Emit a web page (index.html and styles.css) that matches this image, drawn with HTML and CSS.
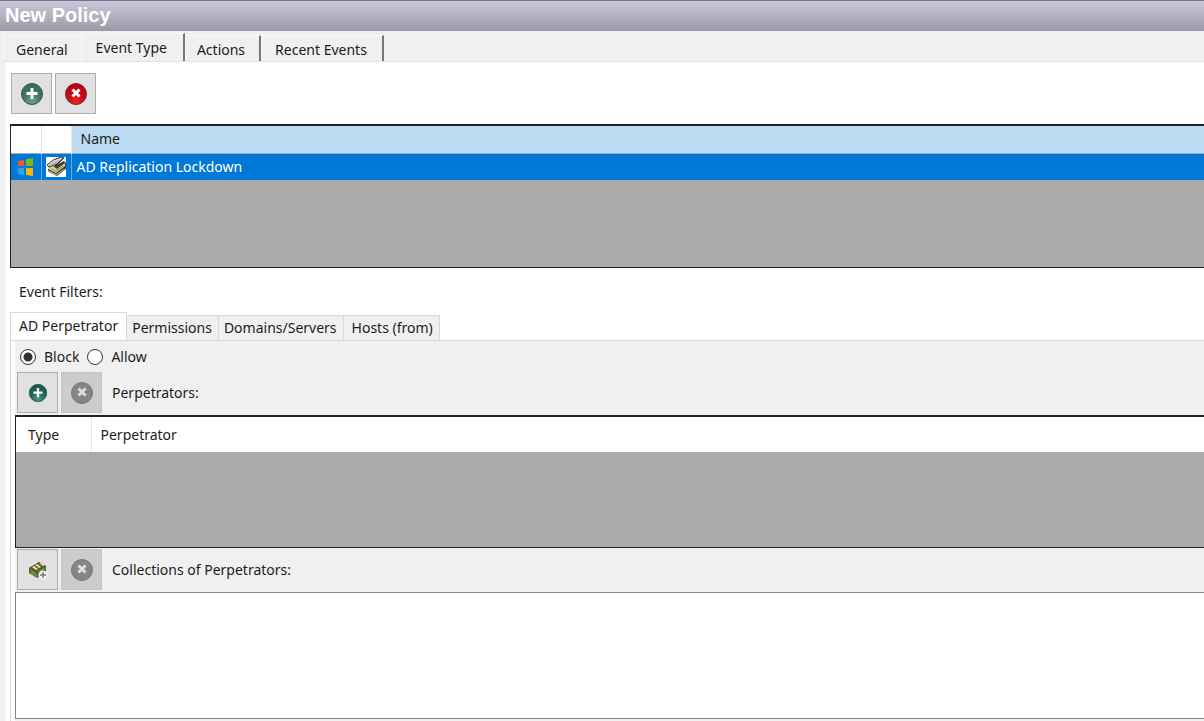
FILE: index.html
```html
<!DOCTYPE html>
<html lang="en">
<head>
<meta charset="utf-8">
<title>New Policy</title>
<link rel="stylesheet" href="styles.css">
</head>
<body>
<svg class="defs" aria-hidden="true">
  <defs>
    <radialGradient id="green" cx="50%" cy="85%" r="85%"><stop offset="0" stop-color="#68a294"/><stop offset=".5" stop-color="#3f7569"/><stop offset="1" stop-color="#3a665d"/></radialGradient>
    <radialGradient id="dark-green" cx="50%" cy="85%" r="85%"><stop offset="0" stop-color="#4c9a83"/><stop offset=".5" stop-color="#1f6755"/><stop offset="1" stop-color="#1d5447"/></radialGradient>
    <radialGradient id="red" cx="50%" cy="85%" r="85%"><stop offset="0" stop-color="#ee2727"/><stop offset=".5" stop-color="#c50b12"/><stop offset="1" stop-color="#b0070d"/></radialGradient>
    <symbol id="plus" viewBox="0 0 24 24"><path d="M12 6v11M6.500 11.500h11" stroke="#fff" stroke-width="2.800" fill="none"/></symbol>
    <symbol id="cross" viewBox="0 0 24 24"><path d="M8.500 7.500l7 7M15.500 7.500l-7 7" stroke="#fff" stroke-width="3" fill="none"/></symbol>
    <symbol id="remove-off" viewBox="0 0 24 24"><circle cx="12" cy="12" r="10.5" fill="#858585" stroke="#777"/><path d="M8.500 7.500l7 7M15.500 7.500l-7 7" stroke="#dedede" stroke-width="3" fill="none"/></symbol>
  </defs>
</svg>
<header class="titlebar"><h1>New Policy</h1></header>
<nav class="tabs" role="tablist" aria-label="Policy">
  <button class="tab" role="tab">General</button>
  <button class="tab tab-active" role="tab" aria-selected="true">Event Type</button>
  <button class="tab tab-edge" role="tab">Actions</button>
  <button class="tab tab-edge tab-last" role="tab">Recent Events</button>
</nav>
<main class="page">
  <div class="toolbar">
    <button class="tool" aria-label="Add event type"><svg viewBox="0 0 24 24"><circle cx="12" cy="12" r="10.5" fill="url(#green)" stroke="#34564f"/><use href="#plus"/></svg></button>
    <button class="tool" aria-label="Remove event type"><svg viewBox="0 0 24 24"><circle cx="12" cy="12" r="10.5" fill="url(#red)" stroke="#83262a"/><use href="#cross"/></svg></button>
  </div>
  <div class="grid events">
    <table>
      <thead><tr><th class="icon-col"></th><th class="icon-col"></th><th class="name-head">Name</th></tr></thead>
      <tbody><tr>
        <td class="icon-col"><svg class="windows" viewBox="0 0 18 20" role="img" aria-label="Windows"><path d="M1 4l6-1v6H1z" fill="#f05a22"/><path d="M9 2l7-1v8H9z" fill="#7cbb12"/><path d="M1 11h6v7l-6-1z" fill="#2ba4f0"/><path d="M9 11h7v8l-7-1z" fill="#f9b500"/></svg></td>
        <td class="icon-col"><svg class="scanner" viewBox="0 0 20 20" role="img" aria-label="Active Directory"><path fill="#fff" d="M0 0h20v20H0z"/><path d="M2 11l6-2 10-5 2 2v6l-9 7-9-5z" fill="#3c3d30"/><path d="M2 11l5-2 4 3 8-6v3l-9 7-8-4z" fill="#d6d48a"/><path d="M5 12l5 2 7-5" fill="none" stroke="#8b8c5b"/><path d="M2 14l8 4 9-6" fill="none" stroke="#a9a98c" stroke-width="1.500"/><path d="M1 8l6-5 8-3 3 1-7 6-8 3z" fill="#b5b6b2" stroke="#44453f"/><path d="M3 8l5-4 7-2" fill="none" stroke="#e5e5e2"/><path d="M9 9l9-8" stroke="#222"/></svg></td>
        <td class="name-cell">AD Replication Lockdown</td>
      </tr></tbody>
    </table>
  </div>
  <h2 class="filters-title">Event Filters:</h2>
  <nav class="filter-tabs" role="tablist" aria-label="Event Filters">
    <button class="filter-tab filter-active" role="tab" aria-selected="true">AD Perpetrator</button>
    <button class="filter-tab" role="tab">Permissions</button>
    <button class="filter-tab" role="tab">Domains/Servers</button>
    <button class="filter-tab filter-last" role="tab">Hosts (from)</button>
  </nav>
  <section class="filter-frame">
    <div class="filter-body">
      <div class="modes">
        <input type="radio" name="mode" id="block" checked><label for="block">Block</label>
        <input type="radio" name="mode" id="allow"><label for="allow">Allow</label>
      </div>
      <div class="toolbar filter-tools">
        <button class="tool" aria-label="Add perpetrator"><svg class="small" viewBox="0 0 24 24"><circle cx="12" cy="12" r="10.5" fill="url(#dark-green)" stroke="#2c6256"/><use href="#plus"/></svg></button>
        <button class="tool" disabled aria-label="Remove perpetrator"><svg viewBox="0 0 24 24"><use href="#remove-off"/></svg></button>
        <span class="tool-label">Perpetrators:</span>
      </div>
      <div class="grid perpetrators">
        <table><thead><tr><th class="type-col">Type</th><th class="who-col">Perpetrator</th></tr></thead></table>
      </div>
      <div class="toolbar filter-tools">
        <button class="tool" aria-label="Add collection"><svg class="small" viewBox="0 0 20 20"><path d="M1 8l10-6 7 4v7l-9 5-8-5z" fill="#4d6a2c"/><path d="M1 8l10-6 7 4-9 6z" fill="#5a5c3a"/><path d="M4 7l4 3 2-1-4-3zM7 5l4 3 2-1-4-3zM11 3l4 3 2-1-4-2z" fill="#efe5a0"/><path d="M2 10l6 4v3M4 12v3M6 13v3M10 12l7-4M10 15l6-4" fill="none" stroke="#82a64c"/><circle cx="15" cy="15" r="4.500" fill="#f2f2f2"/><path d="M15 12v6M12 15h6" stroke="#777" stroke-width="1.400"/></svg></button>
        <button class="tool" disabled aria-label="Remove collection"><svg viewBox="0 0 24 24"><use href="#remove-off"/></svg></button>
        <span class="tool-label">Collections of Perpetrators:</span>
      </div>
      <div class="listbox" role="listbox" aria-label="Collections of Perpetrators"></div>
    </div>
  </section>
</main>
</body>
</html>
```
FILE: styles.css
```css
* { box-sizing: border-box; }
body {
  margin: 0;
  background: #f0f0f0;
  color: #1c1c1c;
  font: 14px/20px "Noto Sans", "Open Sans", sans-serif;
  overflow: hidden;
}
button { font: inherit; color: inherit; cursor: pointer; }
.defs { position: absolute; width: 0; height: 0; }
.titlebar {
  height: 31px;
  padding: 2px 5px;
  border-top: 1px solid #777283;
  background: linear-gradient(#c9c7d8, #b6b4c4 45%, #9998a6);
}
.titlebar h1 {
  margin: 0;
  color: #fff;
  font: bold 20px/24px "Liberation Sans", Arial, sans-serif;
}
.tabs {
  display: flex;
  align-items: flex-end;
  height: 30px;
  padding-left: 3px;
}
.tab {
  height: 26px;
  padding: 2px 13px 0 12px;
  border: 0;
  border-top: 1px solid #fafafa;
  border-left: 1px solid #fafafa;
  background: #f0f0f0;
}
.tab-active {
  height: 28px;
  padding: 0 16px 0 14px;
  border-right: 2px solid #777;
}
.tab-edge { padding: 2px 14px 0 11px; border-right: 2px solid #777; }
.tab-last { padding: 2px 15px 0 13px; }
.page {
  margin-left: 5px;
  padding: 11px 0 0 5px;
  border-top: 1px solid #e3e3e3;
  border-left: 1px solid #fafafa;
  background: #fff;
}
.toolbar { display: flex; align-items: center; gap: 3px; }
.tool {
  display: grid;
  place-items: center;
  width: 41px;
  height: 41px;
  padding: 0;
  border: 1px solid #adadad;
  background: #e1e1e1;
}
.tool:disabled { border-color: #c3c3c3; background: #cccccc; }
.tool svg { width: 24px; height: 24px; }
.tool svg.small { width: 20px; height: 20px; }
.tool-label { padding-left: 7px; }
.grid {
  border: 2px solid #222;
  border-width: 2px 0 1px 1px;
  background: #ababab;
}
.grid table { width: 100%; border-collapse: collapse; }
.grid th { font-weight: normal; text-align: left; background: #fff; }
.events { min-height: 144px; margin: 10px 0 0 -1px; }
.events th, .events td { height: 27px; padding: 0; }
.events thead tr { border-bottom: 1px solid #93afc1; }
.events .icon-col { width: 30px; border-right: 1px solid #e6e6e6; text-align: center; }
.events th.name-head { padding-left: 9px; background: #bbdcf3; }
.events td { background: #0078d7; color: #fff; }
.events td.icon-col { border-color: #6da8d6; }
.events td.name-cell { padding-left: 5px; }
.events svg { display: block; margin: 0 auto; }
.windows { width: 18px; height: 20px; }
.scanner { width: 20px; height: 20px; }
.filters-title { margin: 14px 0 10px 8px; font: inherit; }
.filter-tabs { display: flex; align-items: flex-end; margin-left: -1px; }
.filter-tab {
  height: 25px;
  padding: 0 6px 0 5px;
  border: 1px solid #dadada;
  border-width: 1px 1px 0 0;
  background: #f0f0f0;
}
.filter-active {
  height: 28px;
  padding: 0 8px 2px;
  border-left-width: 1px;
  background: #fff;
}
.filter-last { padding: 0 6px 0 8px; }
.filter-frame {
  margin-left: -1px;
  padding-left: 4px;
  border: 1px solid #dadada;
  border-width: 1px 0 0 1px;
  background: #fff;
}
.filter-body { padding: 6px 0 3px; background: #f0f0f0; }
.modes { display: flex; align-items: center; padding: 0 0 5px 5px; }
.modes input {
  appearance: none;
  width: 16px;
  height: 16px;
  margin: 0 8px 0 0;
  border: 1px solid #333;
  border-radius: 50%;
  background: #fff;
}
.modes input:checked { background: radial-gradient(circle, #333 4px, #fff 5px); }
.modes label { margin-right: 8px; }
.filter-tools { padding-left: 2px; }
.perpetrators { min-height: 133px; margin: 2px 0 1px; }
.perpetrators th { height: 35px; padding: 0 0 0 9px; }
.perpetrators th.type-col { width: 75px; padding-left: 12px; border-right: 1px solid #e5e5e5; }
.listbox {
  min-height: 127px;
  margin-top: 2px;
  border: 1px solid #828790;
  border-right: 0;
  background: #fff;
}
```
